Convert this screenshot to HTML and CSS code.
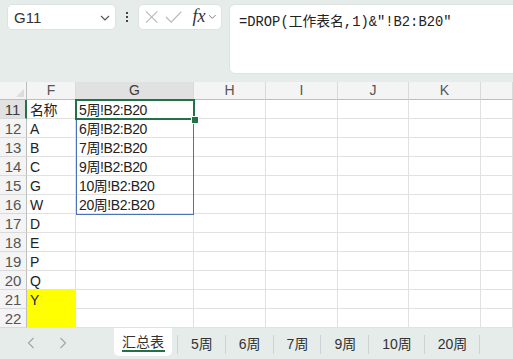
FILE: index.html
```html
<html>
<head>
<meta charset="utf-8">
<title>汇总表</title>
<link rel="stylesheet" href="styles.css">
</head>
<body>
<div class="top">
  <div class="namebox">
    <span>G11</span>
    <svg class="chev" width="10" height="6" viewBox="0 0 10 6"><path d="M1 1 L5 5 L9 1" fill="none" stroke="#555" stroke-width="1.2"/></svg>
  </div>
  <div class="dots"><i></i><i></i><i></i></div>
  <div class="fxbox">
    <svg width="14" height="14" viewBox="0 0 14 14"><path d="M1 1 L13 13 M13 1 L1 13" stroke="#b9b9b9" stroke-width="1.2"/></svg>
    <svg width="18" height="14" viewBox="0 0 18 14"><path d="M1 7 L6.5 12.5 L17 1.5" fill="none" stroke="#b9b9b9" stroke-width="1.2"/></svg>
    <span class="fx">fx</span>
    <svg width="9" height="6" viewBox="0 0 9 6"><path d="M1 1 L4.5 4.5 L8 1" fill="none" stroke="#777" stroke-width="1"/></svg>
  </div>
  <div class="formula">=DROP(工作表名,1)&amp;"!B2:B20"</div>
</div>

<div class="sheet">
  <div class="hd corner"></div>
  <div class="hd">F</div>
  <div class="hd sel">G</div>
  <div class="hd">H</div>
  <div class="hd">I</div>
  <div class="hd">J</div>
  <div class="hd">K</div>
  <div class="hd"></div>

  <div class="rh rsel">11</div><div class="c">名称</div><div class="c">5周!B2:B20</div><div class="c"></div><div class="c"></div><div class="c"></div><div class="c"></div><div class="c"></div>
  <div class="rh">12</div><div class="c">A</div><div class="c">6周!B2:B20</div><div class="c"></div><div class="c"></div><div class="c"></div><div class="c"></div><div class="c"></div>
  <div class="rh">13</div><div class="c">B</div><div class="c">7周!B2:B20</div><div class="c"></div><div class="c"></div><div class="c"></div><div class="c"></div><div class="c"></div>
  <div class="rh">14</div><div class="c">C</div><div class="c">9周!B2:B20</div><div class="c"></div><div class="c"></div><div class="c"></div><div class="c"></div><div class="c"></div>
  <div class="rh">15</div><div class="c">G</div><div class="c">10周!B2:B20</div><div class="c"></div><div class="c"></div><div class="c"></div><div class="c"></div><div class="c"></div>
  <div class="rh">16</div><div class="c">W</div><div class="c">20周!B2:B20</div><div class="c"></div><div class="c"></div><div class="c"></div><div class="c"></div><div class="c"></div>
  <div class="rh">17</div><div class="c">D</div><div class="c"></div><div class="c"></div><div class="c"></div><div class="c"></div><div class="c"></div><div class="c"></div>
  <div class="rh">18</div><div class="c">E</div><div class="c"></div><div class="c"></div><div class="c"></div><div class="c"></div><div class="c"></div><div class="c"></div>
  <div class="rh">19</div><div class="c">P</div><div class="c"></div><div class="c"></div><div class="c"></div><div class="c"></div><div class="c"></div><div class="c"></div>
  <div class="rh">20</div><div class="c">Q</div><div class="c"></div><div class="c"></div><div class="c"></div><div class="c"></div><div class="c"></div><div class="c"></div>
  <div class="rh">21</div><div class="c yel">Y</div><div class="c"></div><div class="c"></div><div class="c"></div><div class="c"></div><div class="c"></div><div class="c"></div>
  <div class="rh">22</div><div class="c yel"></div><div class="c"></div><div class="c"></div><div class="c"></div><div class="c"></div><div class="c"></div><div class="c"></div>

  <div class="spill"></div>
  <div class="cursor"></div>
  <div class="handle"></div>
</div>

<div class="tabs">
  <div class="nav">
    <svg width="8" height="12" viewBox="0 0 8 12"><path d="M6.5 1 L1.5 6 L6.5 11" fill="none" stroke="#a6a6a6" stroke-width="1.2"/></svg>
    <svg width="8" height="12" viewBox="0 0 8 12"><path d="M1.5 1 L6.5 6 L1.5 11" fill="none" stroke="#a6a6a6" stroke-width="1.2"/></svg>
  </div>
  <div class="tab active">汇总表</div>
  <div class="tab">5周</div>
  <div class="tab">6周</div>
  <div class="tab">7周</div>
  <div class="tab">9周</div>
  <div class="tab">10周</div>
  <div class="tab">20周</div>
  <div class="tab end"></div>
</div>
</body>
</html>
```

FILE: styles.css
```css
body {margin:0; width:513px; height:359px; overflow:hidden; background-color:#e6ece9; font-family:"Liberation Sans", "Noto Sans CJK SC", sans-serif; color:#222}

.top {height:82px; display:flex; align-items:flex-start; padding:4px 0 0 7px; box-sizing:border-box}
.top > div {flex-shrink:0}
.namebox {width:109px; height:26px; box-sizing:border-box; background-color:#fff; border:1px solid #dde3e0; border-radius:5px; display:flex; align-items:center; justify-content:space-between; padding:0 5px 0 6px; font-size:15px; color:#333}
.namebox .chev {margin-top:1px}
.dots {width:22px; height:26px; display:flex; flex-direction:column; align-items:center; justify-content:center; gap:2px}
.dots i {width:2px; height:2px; background-color:#444; display:block}
.fxbox {width:84px; height:26px; box-sizing:border-box; background-color:#fff; border:1px solid #dde3e0; border-radius:5px; display:flex; align-items:center; padding:0 4px 0 6px; gap:7px}
.fxbox .fx {font-family:"Liberation Serif", serif; font-style:italic; font-size:18px; color:#333; margin-left:3px; margin-right:-4px; margin-top:-2px}
.formula {margin-left:7px; width:300px; height:70px; box-sizing:border-box; background-color:#fff; border:1px solid #dde3e0; border-radius:6px; padding:5px 0 0 9px; font-family:"Liberation Mono", "Noto Sans CJK SC", monospace; font-size:13.8px; color:#222}

.sheet {position:relative; background-color:#fff; display:grid; grid-template-columns:27px 49px 118px 72px 72px 71px 72px 1fr; grid-template-rows:18px repeat(12, 19px); font-size:14px}
.hd {background-color:#f4f4f4; border-right:1px solid #dadada; border-bottom:1px solid #bdbdbd; box-sizing:border-box; text-align:center; line-height:17px; font-size:14px; color:#555}
.hd.sel {background-color:#e1e1e1; color:#3d3d3d}
.corner {position:relative; border-right:1px solid #bdbdbd}
.corner::after {content:""; position:absolute; right:2px; bottom:2px; border-left:8px solid transparent; border-bottom:8px solid #dcdcdc}
.rh {background-color:#f4f4f4; border-right:1px solid #bdbdbd; border-bottom:1px solid #dadada; box-sizing:border-box; text-align:center; line-height:19px; font-size:15px; color:#555}
.rh.rsel {background-color:#e1e1e1; border-right:2px solid #217346; color:#3d3d3d}
.c {border-right:1px solid #e1e1e1; border-bottom:1px solid #e1e1e1; box-sizing:border-box; padding:1px 0 0 3px; line-height:19px; white-space:nowrap; overflow:hidden; letter-spacing:-0.4px}
.c.yel {background-color:#ffff00; border-color:#ffff00}

.spill {position:absolute; left:76px; top:18px; width:118px; height:115px; box-sizing:border-box; border:1px solid #4a72b8}
.cursor {position:absolute; left:75px; top:17px; width:120px; height:21px; box-sizing:border-box; border:2px solid #217346}
.handle {position:absolute; left:191px; top:34px; width:6px; height:6px; background-color:#217346; border:1px solid #fff}

.tabs {height:31px; display:flex; align-items:flex-start; font-size:14px; color:#333}
.nav {width:114px; height:29px; display:flex; align-items:center; gap:24px; padding-left:27px; box-sizing:border-box}
.tab {height:28px; line-height:30px; padding:0 13px; margin-top:1px; position:relative}
.tab + .tab::before {content:""; position:absolute; left:-1px; top:6px; height:19px; border-left:1px solid #cdd3d0}
.tab.active {background-color:#fff; padding:0 8px; border-radius:0 0 5px 5px; margin-top:0; margin-right:6px; height:28px; line-height:28px}
.tab.active::after {content:""; position:absolute; left:8px; right:7px; bottom:4px; height:2px; background-color:#217346}
.tab.end {padding:0}
```
